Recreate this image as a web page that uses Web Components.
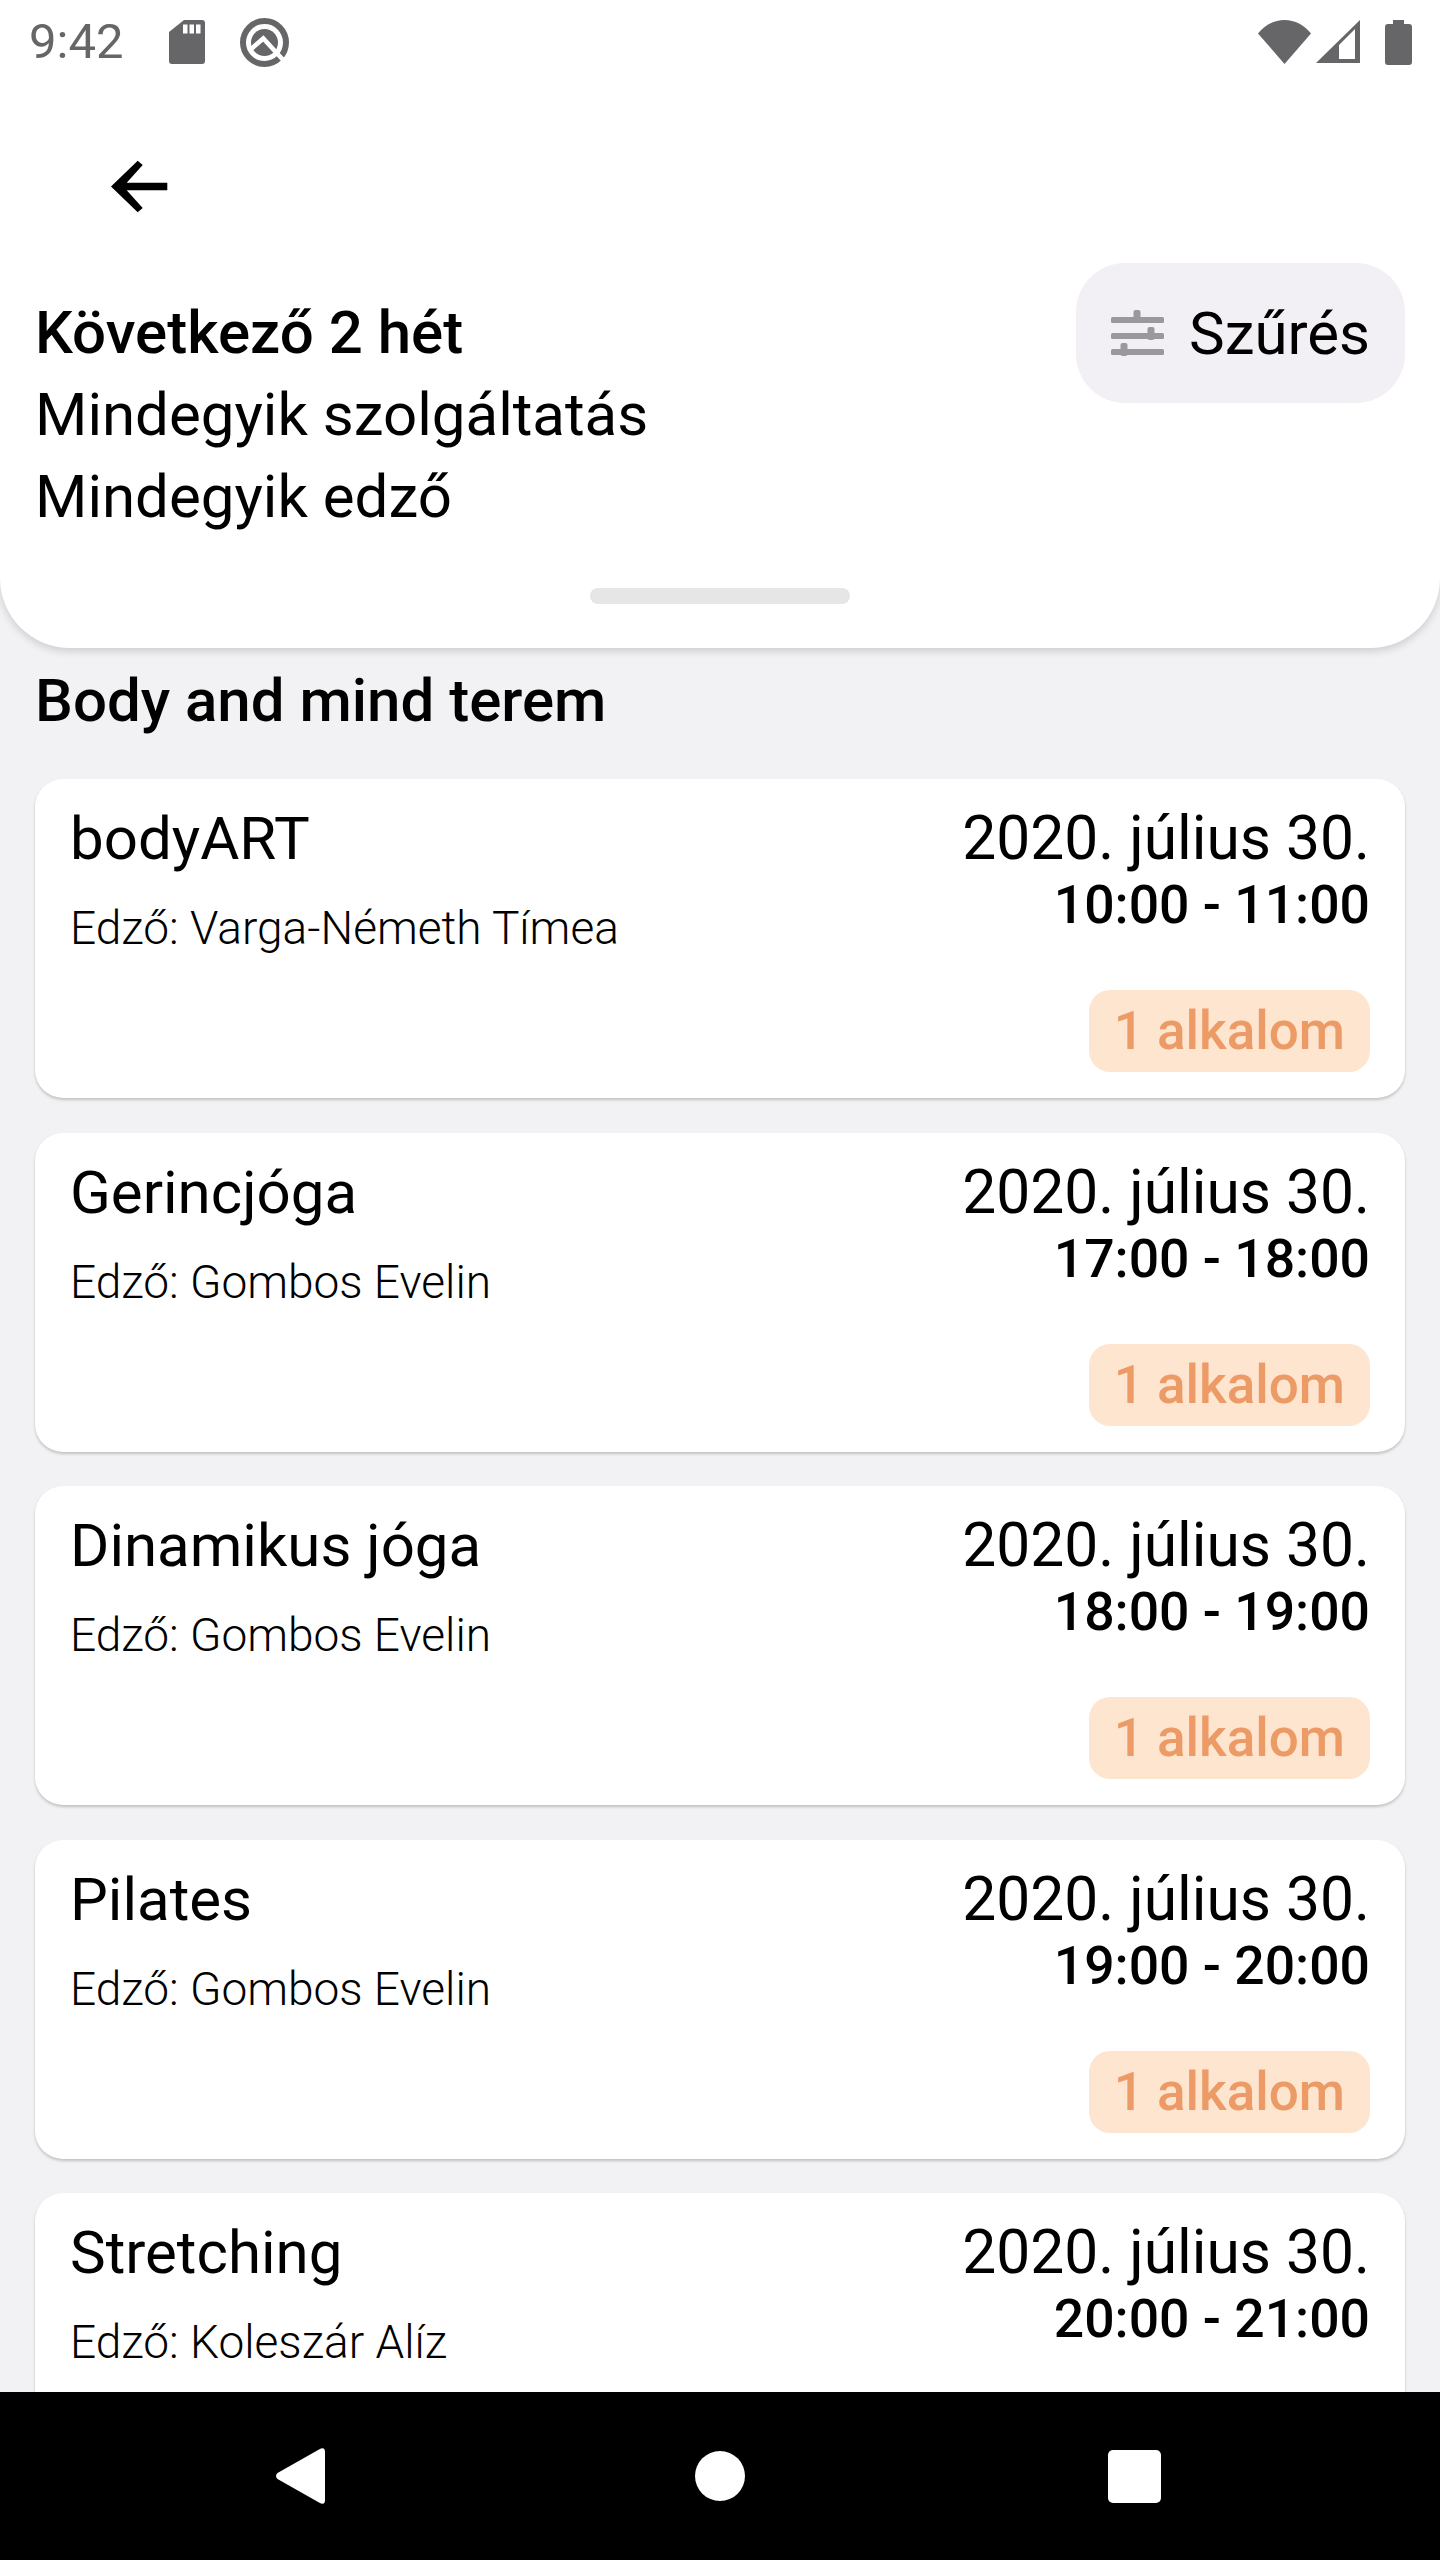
<!DOCTYPE html>
<html>
  <head>
    <meta charset="UTF-8" />
    <title>Foglalások</title>
    <style>
      html, body { margin: 0; padding: 0; background: #f2f1f4; }
      body { font-family: Roboto, "Liberation Sans", sans-serif; }
    </style>
  </head>
  <body>
    <booking-app>
      <filter-panel slot="head"></filter-panel>
      <h-section-title slot="title">Body and mind terem</h-section-title>
      <booking-card name="bodyART" trainer="Edző: Varga-Németh Tímea" time="10:00 - 11:00"></booking-card>
      <booking-card name="Gerincjóga" trainer="Edző: Gombos Evelin" time="17:00 - 18:00"></booking-card>
      <booking-card name="Dinamikus jóga" trainer="Edző: Gombos Evelin" time="18:00 - 19:00"></booking-card>
      <booking-card name="Pilates" trainer="Edző: Gombos Evelin" time="19:00 - 20:00"></booking-card>
      <booking-card name="Stretching" trainer="Edző: Koleszár Alíz" time="20:00 - 21:00"></booking-card>
      <nav-bar slot="nav"></nav-bar>
    </booking-app>
    <script>
      // Page frame: header on top, clipped list in the middle, nav bar at the bottom
      class BookingApp extends HTMLElement {
        constructor() {
          super();
          this.attachShadow({ mode: "open" }).innerHTML = `
            <style>
              :host { display: flex; flex-direction: column; width: 1440px; height: 2560px; overflow: hidden; background: #f2f1f4; }
              .list { flex: 1; min-height: 0; overflow: hidden; display: flex; flex-direction: column; gap: 34.500px; padding: 0 35px; }
              ::slotted(h-section-title) { margin-bottom: 2.500px; }
            </style>
            <slot name="head"></slot>
            <div class="list">
              <slot name="title"></slot>
              <slot></slot>
            </div>
            <slot name="nav"></slot>`;
        }
      }

      class StatusBar extends HTMLElement {
        constructor() {
          super();
          this.attachShadow({ mode: "open" }).innerHTML = `
            <style>
              :host { display: flex; align-items: center; height: 84px; color: #666568; font-size: 49px; }
              .time { margin-left: 29px; width: 140px; line-height: 84px; }
              svg { display: block; fill: #666568; }
              .spacer { flex: 1; }
            </style>
            <span class="time">9:42</span>
            <svg width="36" height="44" viewBox="0 0 36 44">
              <path d="M15 0H33a3 3 0 0 1 3 3V41a3 3 0 0 1-3 3H3a3 3 0 0 1-3-3V12Z"/>
              <path fill="#fff" d="M14 4.500h4.500v9H14zM20.500 4.500H25v9h-4.500zM27 4.500h4.500v9H27z"/>
            </svg>
            <svg style="margin-left:35px" width="49" height="49" viewBox="0 0 49 49">
              <circle cx="24.500" cy="24.500" r="21.500" fill="none" stroke="#666568" stroke-width="6"/>
              <circle cx="24.500" cy="24.500" r="13.500"/>
              <path d="M10 32L23.300 20.500L45 44" fill="none" stroke="#fff" stroke-width="4.500"/>
            </svg>
            <span class="spacer"></span>
            <svg width="53" height="44" viewBox="0 0 53 44"><path d="M0 13.500C7 5 16 0 26.500 0S46 5 53 13.500L26.500 44Z"/></svg>
            <svg style="margin-left:5px" width="44" height="44" viewBox="0 0 44 44"><path fill-rule="evenodd" d="M44 0V43H0ZM23 25V39H39V9Z"/></svg>
            <svg style="margin-left:25px;margin-right:28px" width="27" height="45" viewBox="0 0 27 45"><path d="M8 0H19V4H24a3 3 0 0 1 3 3V42a3 3 0 0 1-3 3H3a3 3 0 0 1-3-3V7a3 3 0 0 1 3-3H8Z"/></svg>`;
        }
      }
      customElements.define("status-bar", StatusBar);

      class FilterButton extends HTMLElement {
        constructor() {
          super();
          this.attachShadow({ mode: "open" }).innerHTML = `
            <style>
              :host { display: flex; align-items: center; box-sizing: border-box; width: 329px; height: 140px; padding-left: 35px; gap: 25px; border-radius: 49px; background: #f2f0f4; color: #000; font-size: 60px; }
              svg { display: block; flex: none; fill: #9a989c; }
            </style>
            <svg width="53" height="46" viewBox="0 0 53 46">
              <rect y="7" width="53" height="6" rx="1.500"/><rect x="22.500" width="7" height="13" rx="2"/>
              <rect y="23" width="53" height="6" rx="1.500"/><rect x="36.500" y="17" width="7" height="13" rx="2"/>
              <rect y="39" width="53" height="6" rx="1.500"/><rect x="9.500" y="33" width="7" height="13" rx="2"/>
            </svg>
            <slot></slot>`;
        }
      }
      customElements.define("filter-button", FilterButton);

      // White rounded header with the current filters
      class FilterPanel extends HTMLElement {
        constructor() {
          super();
          this.attachShadow({ mode: "open" }).innerHTML = `
            <style>
              :host { display: block; position: relative; z-index: 1; height: 648px; background: #fff; border-radius: 0 0 70px 70px; box-shadow: 0 3px 8px rgba(0,0,0,.16); font-size: 60px; color: #000; }
              .back { box-sizing: border-box; height: 179px; padding: 74px 0 0 110px; }
              .back svg { display: block; }
              .row { display: flex; justify-content: space-between; padding: 0 35px; height: 325px; }
              .lines { padding-top: 29px; line-height: 82px; }
              .lines b { font-weight: 500; }
              .handle { width: 260px; height: 16px; margin: 0 auto; border-radius: 8px; background: #e6e6e6; }
            </style>
            <status-bar></status-bar>
            <div class="back">
              <svg width="60" height="60" viewBox="0 0 60 60"><path d="M1 28.500L27.700 2.700L32.700 7L16.700 24.700H57.300V32.300H16.700L32.700 50L27.700 54.300Z"/></svg>
            </div>
            <div class="row">
              <div class="lines"><b>Következő 2 hét</b><br>Mindegyik szolgáltatás<br>Mindegyik edző</div>
              <filter-button>Szűrés</filter-button>
            </div>
            <div class="handle"></div>`;
        }
      }
      customElements.define("filter-panel", FilterPanel);

      class SectionTitle extends HTMLElement {
        constructor() {
          super();
          this.attachShadow({ mode: "open" }).innerHTML = `
            <style>
              :host { display: block; font-size: 60px; font-weight: 500; line-height: 82px; padding: 12px 0 0 0; color: #000; }
            </style>
            <slot></slot>`;
        }
      }
      customElements.define("h-section-title", SectionTitle);

      // One class entry; name, trainer and time come from attributes
      class BookingCard extends HTMLElement {
        constructor() {
          super();
          const name = this.getAttribute("name");
          const trainer = this.getAttribute("trainer");
          const time = this.getAttribute("time");
          this.attachShadow({ mode: "open" }).innerHTML = `
            <style>
              :host { display: flex; flex: none; justify-content: space-between; box-sizing: border-box; height: 319px; padding: 27px 35px 26px; background: #fff; border-radius: 28px; box-shadow: 0 2px 3px rgba(0,0,0,.2); color: #000; }
              .name { font-size: 60px; line-height: 66px; }
              .trainer { font-size: 46px; font-weight: 300; line-height: 58px; margin-top: 27px; }
              .right { display: flex; flex-direction: column; align-items: flex-end; }
              .date { font-size: 60.500px; line-height: 66px; }
              .time { font-size: 53.500px; font-weight: 500; line-height: 66px; }
              .count { margin-top: auto; box-sizing: border-box; height: 82px; padding: 0 25px; border-radius: 21px; background: #fde5d0; color: #ec9a66; font-size: 53px; font-weight: 500; line-height: 82px; }
            </style>
            <div>
              <div class="name">${name}</div>
              <div class="trainer">${trainer}</div>
            </div>
            <div class="right">
              <div class="date">2020. július 30.</div>
              <div class="time">${time}</div>
              <div class="count">1 alkalom</div>
            </div>`;
        }
      }
      customElements.define("booking-card", BookingCard);

      class NavBar extends HTMLElement {
        constructor() {
          super();
          this.attachShadow({ mode: "open" }).innerHTML = `
            <style>
              :host { display: flex; flex: none; position: relative; z-index: 2; align-items: center; height: 168px; background: #000; }
              svg { display: block; fill: #fff; flex: none; }
            </style>
            <svg style="margin-left:276px" width="49" height="56" viewBox="0 0 49 56"><path d="M1.500 25L43 1.500Q49-2 49 4V52Q49 58 43 54.500L1.500 31Q-1.500 28 1.500 25Z"/></svg>
            <svg style="margin-left:370px" width="50" height="50" viewBox="0 0 50 50"><circle cx="25" cy="25" r="25"/></svg>
            <svg style="margin-left:363px" width="53" height="53" viewBox="0 0 53 53"><rect width="53" height="53" rx="5"/></svg>`;
        }
      }
      customElements.define("nav-bar", NavBar);

      customElements.define("booking-app", BookingApp);
    </script>
  </body>
</html>
